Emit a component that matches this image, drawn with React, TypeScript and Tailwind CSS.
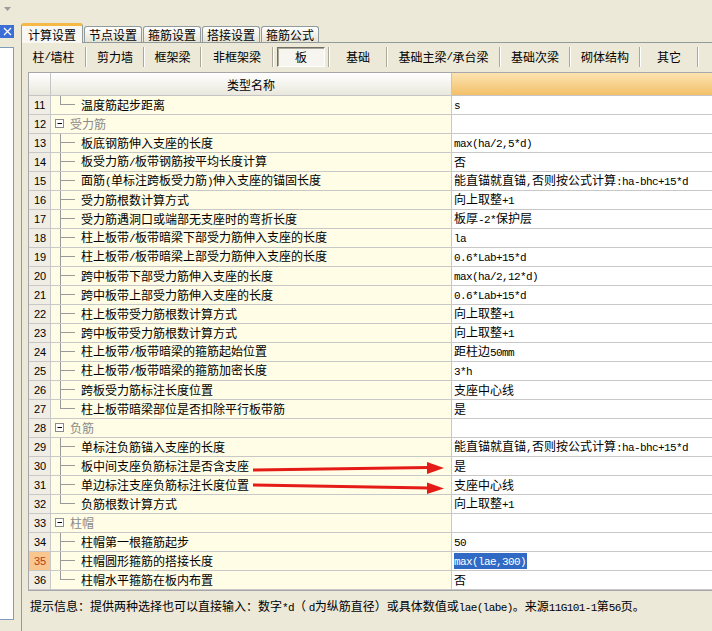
import React from "react";

type Row = {
  n: number;
  name: string;
  value?: string;
  group?: boolean;
  last?: boolean;
  selected?: boolean;
};

const rows: Row[] = [
  { n: 11, name: "温度筋起步距离", value: "s", last: true },
  { n: 12, name: "受力筋", group: true },
  { n: 13, name: "板底钢筋伸入支座的长度", value: "max(ha/2,5*d)" },
  { n: 14, name: "板受力筋/板带钢筋按平均长度计算", value: "否" },
  { n: 15, name: "面筋(单标注跨板受力筋)伸入支座的锚固长度", value: "能直锚就直锚,否则按公式计算:ha-bhc+15*d" },
  { n: 16, name: "受力筋根数计算方式", value: "向上取整+1" },
  { n: 17, name: "受力筋遇洞口或端部无支座时的弯折长度", value: "板厚-2*保护层" },
  { n: 18, name: "柱上板带/板带暗梁下部受力筋伸入支座的长度", value: "la" },
  { n: 19, name: "柱上板带/板带暗梁上部受力筋伸入支座的长度", value: "0.6*Lab+15*d" },
  { n: 20, name: "跨中板带下部受力筋伸入支座的长度", value: "max(ha/2,12*d)" },
  { n: 21, name: "跨中板带上部受力筋伸入支座的长度", value: "0.6*Lab+15*d" },
  { n: 22, name: "柱上板带受力筋根数计算方式", value: "向上取整+1" },
  { n: 23, name: "跨中板带受力筋根数计算方式", value: "向上取整+1" },
  { n: 24, name: "柱上板带/板带暗梁的箍筋起始位置", value: "距柱边50mm" },
  { n: 25, name: "柱上板带/板带暗梁的箍筋加密长度", value: "3*h" },
  { n: 26, name: "跨板受力筋标注长度位置", value: "支座中心线" },
  { n: 27, name: "柱上板带暗梁部位是否扣除平行板带筋", value: "是", last: true },
  { n: 28, name: "负筋", group: true },
  { n: 29, name: "单标注负筋锚入支座的长度", value: "能直锚就直锚,否则按公式计算:ha-bhc+15*d" },
  { n: 30, name: "板中间支座负筋标注是否含支座", value: "是" },
  { n: 31, name: "单边标注支座负筋标注长度位置", value: "支座中心线" },
  { n: 32, name: "负筋根数计算方式", value: "向上取整+1", last: true },
  { n: 33, name: "柱帽", group: true },
  { n: 34, name: "柱帽第一根箍筋起步", value: "50" },
  { n: 35, name: "柱帽圆形箍筋的搭接长度", value: "max(lae,300)", selected: true },
  { n: 36, name: "柱帽水平箍筋在板内布置", value: "否", last: true },
];

const tabs = ["计算设置", "节点设置", "箍筋设置", "搭接设置", "箍筋公式"];

const tools = [
  { label: "柱/墙柱", w: "w-[63px]" },
  { label: "剪力墙", w: "w-[56px]" },
  { label: "框架梁", w: "w-[55px]" },
  { label: "非框架梁", w: "w-[70px]" },
  { label: "板", w: "w-[54px]", active: true },
  { label: "基础", w: "w-[56px]" },
  { label: "基础主梁/承台梁", w: "w-[111px]" },
  { label: "基础次梁", w: "w-[68px]" },
  { label: "砌体结构", w: "w-[68px]" },
  { label: "其它", w: "w-[56px]" },
];

// half-width latin runs render like the old bitmap font (6px per char)
function Mixed({ text }: { text: string }) {
  return (
    <>
      {text.split(/([\x21-\x7e]+)/).map((part, i) =>
        /^[\x21-\x7e]+$/.test(part) ? (
          <span key={i} className="font-['Liberation_Mono',monospace] text-[11px] tracking-[-0.6px]">
            {part}
          </span>
        ) : (
          <span key={i}>{part}</span>
        )
      )}
    </>
  );
}

function TreeMark({ row }: { row: Row }) {
  if (row.group) {
    return (
      <svg width="19" height="18" className="shrink-0">
        <rect x="4.5" y="4.5" width="8" height="8" fill="#fff" stroke="#8c8c8c" />
        <line x1="6.5" y1="8.5" x2="11" y2="8.5" stroke="#000" />
      </svg>
    );
  }
  return (
    <svg width="30" height="18" className="shrink-0">
      <line x1="9.5" y1="0" x2="9.5" y2={row.last ? 9 : 18} stroke="#9a9a9a" />
      <line x1="9.5" y1="8.5" x2="24" y2="8.5" stroke="#9a9a9a" />
    </svg>
  );
}

function Sep() {
  return <div className="w-[2px] h-[20px] border-l border-r border-l-[#ACA899] border-r-white shrink-0" />;
}

export default function App() {
  return (
    <div className="relative w-[712px] h-[631px] overflow-hidden bg-[#ECE9D8] flex text-[12px] text-black font-['Noto_Sans_CJK_SC',sans-serif]">
      <aside className="w-[21px] shrink-0 flex flex-col">
        <div className="h-[25px] pl-[4px] pt-[7px]">
          <svg width="7" height="4">
            <polygon points="0,0 7,0 3.5,4" fill="#9b9b9b" />
          </svg>
        </div>
        <div className="w-[14px] h-[13px] bg-[#3C6FD6] flex items-center justify-center">
          <svg width="9" height="9">
            <path d="M1 1 L8 8 M8 1 L1 8" stroke="#fff" strokeWidth="1.3" />
          </svg>
        </div>
        <div className="mt-[9px] mb-[11px] w-[14px] flex-1 bg-white border-r border-t border-b border-[#7F9DB9]" />
      </aside>

      <main className="flex-1 flex flex-col pt-[23px] min-w-0">
        <div className="h-[19px] flex items-end relative z-10">
          {tabs.map((t, i) =>
            i === 0 ? (
              <div
                key={t}
                className="w-[62px] h-[20px] -mb-[1px] bg-[#F8F7F2] border-x border-[#919B9C] border-t-[3px] border-t-[#F5B947] rounded-t-[3px] flex items-center justify-center leading-none"
              >
                {t}
              </div>
            ) : (
              <div
                key={t}
                className="w-[58px] h-[16px] ml-[1px] bg-gradient-to-b from-white to-[#E6E3D4] border border-b-0 border-[#919B9C] rounded-t-[3px] flex items-center justify-center leading-none"
              >
                {t}
              </div>
            )
          )}
        </div>

        <div className="flex-1 border-t border-l border-[#919B9C] flex flex-col">
          <div className="h-[26px] mt-[1px] flex items-center">
            {tools.map((tool) => (
              <React.Fragment key={tool.label}>
                <div className={`${tool.w} h-[26px] flex items-center justify-center shrink-0`}>
                  {tool.active ? (
                    <div className="w-[48px] h-[20px] flex items-center justify-center bg-[#F6F5EF] border border-t-[#716F64] border-l-[#716F64] border-b-white border-r-white shadow-[inset_1px_1px_0_#ACA899]">
                      <Mixed text={tool.label} />
                    </div>
                  ) : (
                    <Mixed text={tool.label} />
                  )}
                </div>
                <Sep />
              </React.Fragment>
            ))}
          </div>

          <div className="ml-[6px] mt-[2px] w-[700px] border border-[#A7A6AA]">
            <div className="flex h-[23px] border-b border-[#C5C5C5]">
              <div className="w-[22px] shrink-0 border-r border-[#C5C5C5] bg-gradient-to-b from-white to-[#EAE8DC]" />
              <div className="w-[401px] shrink-0 border-r border-[#C5C5C5] bg-gradient-to-b from-white to-[#EAE8DC] flex items-center justify-center pt-[2px]">
                类型名称
              </div>
              <div className="flex-1 bg-gradient-to-b from-[#FCE3B0] to-[#F2C068]" />
            </div>

            {rows.map((row) => (
              <div key={row.n} className="flex h-[19px] border-b border-[#C8C8C8] leading-[18px]">
                <div
                  className={
                    row.selected
                      ? "w-[22px] shrink-0 border-r border-[#C8C8C8] bg-[#F9C68D] text-[#B0421E] pl-[5px] font-['Liberation_Sans',sans-serif] text-[11px]"
                      : "w-[22px] shrink-0 border-r border-[#C8C8C8] bg-[#EFEDE4] pl-[5px] font-['Liberation_Sans',sans-serif] text-[11px]"
                  }
                >
                  {row.n}
                </div>
                <div className="w-[401px] shrink-0 border-r border-[#C8C8C8] bg-[#FFFDE6] flex items-center whitespace-nowrap overflow-hidden">
                  <TreeMark row={row} />
                  <span className={row.group ? "text-[#8a8a8a]" : ""}>
                    <Mixed text={row.name} />
                  </span>
                </div>
                <div className="flex-1 bg-white pl-[2px] flex items-center whitespace-nowrap">
                  {row.value &&
                    (row.selected ? (
                      <span className="bg-[#316AC5] text-white leading-[13px] pr-[1px]">
                        <Mixed text={row.value} />
                      </span>
                    ) : (
                      <span>
                        <Mixed text={row.value} />
                      </span>
                    ))}
                </div>
              </div>
            ))}
          </div>

          <div className="ml-[8px] mt-[6px] leading-[18px] whitespace-nowrap">
            <Mixed text="提示信息：提供两种选择也可以直接输入：数字*d（ d为纵筋直径）或具体数值或lae(labe)。来源11G101-1第56页。" />
          </div>
        </div>
      </main>

      <svg className="absolute inset-0 pointer-events-none" width="712" height="631">
        <line x1="253" y1="470" x2="429" y2="467.5" stroke="#E41B17" strokeWidth="3" />
        <polygon points="427,462 444,468 427,474" fill="#E41B17" />
        <line x1="253" y1="485" x2="429" y2="488" stroke="#E41B17" strokeWidth="3" />
        <polygon points="427,482.5 444,488.5 427,494" fill="#E41B17" />
      </svg>
    </div>
  );
}
